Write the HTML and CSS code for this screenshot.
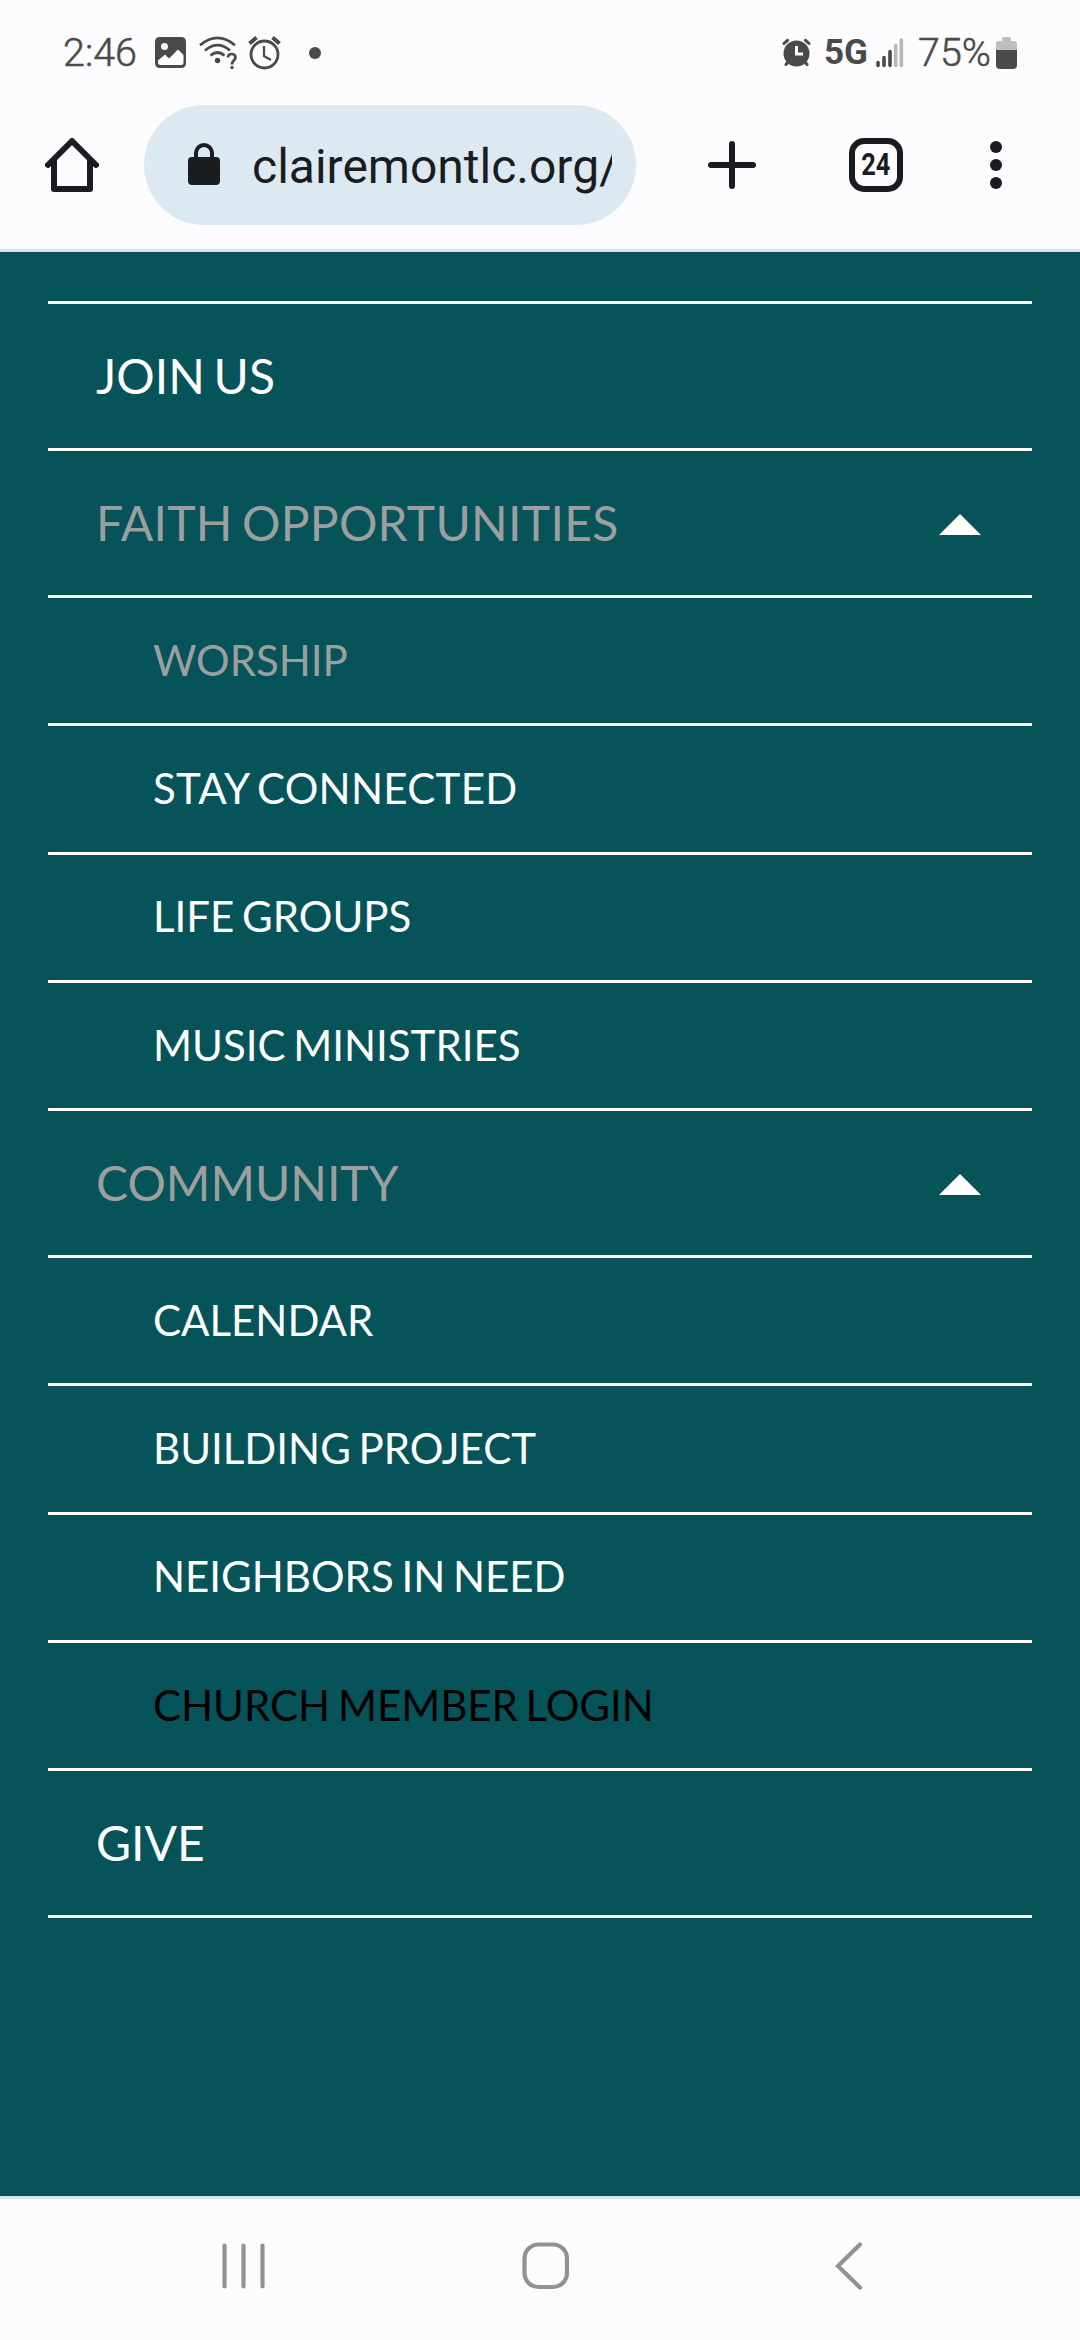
FILE: index.html
```html
<!DOCTYPE html>
<html lang="en">
<head>
<meta charset="utf-8">
<title>Clairemont LC</title>
<link rel="stylesheet" href="styles.css">
</head>
<body>
<div class="status">
  <span class="clock">2:46</span>
  <svg class="picture" width="31" height="31" viewBox="0 0 31 31"><path fill-rule="evenodd" fill="#4a4a4a" d="M5 0H26Q31 0 31 5V26Q31 31 26 31H5Q0 31 0 26V5Q0 0 5 0ZM9.500 6A3.500 3.500 0 1 0 9.500 13A3.500 3.500 0 1 0 9.500 6ZM3 23.500L10 17.500L14 21.500L23 12.500L28.500 18V25.500Q28.500 28 26 28H5.500Q3 28 3 25.500Z"/></svg>
  <svg class="wifi" width="38" height="34" viewBox="0 0 38 34" fill="none" stroke="#4a4a4a" stroke-width="2.700"><path d="M1 9.200Q18.500-5.500 36 9.200M6 14.500Q18.500 3.800 31 14.500M11.500 19.500Q18.500 13.500 25.500 19.500"/><circle cx="18.500" cy="24.500" r="2.700" fill="#4a4a4a" stroke="none"/><path d="M29 21.500C28.700 16.800 36.500 16.800 36.500 21.500C36.500 24.500 33 24.300 33 28.500"/><circle cx="33" cy="31.500" r="1.700" fill="#4a4a4a" stroke="none"/></svg>
  <svg class="alarm" width="33" height="34" viewBox="0 0 33 34" fill="none" stroke="#4a4a4a"><circle cx="16.500" cy="18.500" r="13.500" stroke-width="2.800"/><path stroke-width="2.200" d="M16 10V20L23 24"/><path stroke-width="4" d="M1.500 7.500L8.500 1.500M24.500 1.500L31.500 7.500"/></svg>
  <span class="dot"></span>
  <svg class="alarm-set" width="29" height="29" viewBox="0 0 29 29" fill="none" stroke="#4a4a4a" stroke-width="3" stroke-linecap="round"><circle cx="14.500" cy="15.500" r="13" fill="#4a4a4a" stroke="none"/><path d="M2 5.500L5.500 2.300M23.500 2.300L27 5.500M4 26.500L6 24M23 24L25 26.500"/><path stroke="#fcfcff" stroke-linecap="butt" d="M14.500 8V16H21"/></svg>
  <span class="network">5G</span>
  <svg class="signal" width="28" height="30" viewBox="0 0 28 30" stroke-width="3.600" stroke-linecap="round"><path stroke="#4a4a4a" d="M2 24.500V27.500M8 19.500V27.500M14 13.500V27.500"/><path stroke="#b7b7b9" d="M19.700 7.500V27.500M25.300 2V27.500"/></svg>
  <span class="percent">75%</span>
  <svg class="battery" width="21" height="32" viewBox="0 0 21 32"><path fill="#bebec0" d="M6 4V2Q6 0 8 0H13Q15 0 15 2V4H18Q21 4 21 7V13H0V7Q0 4 3 4Z"/><path fill="#4a4a4a" d="M0 13H21V28Q21 32 17 32H4Q0 32 0 28Z"/></svg>
</div>
<div class="toolbar">
  <svg class="home" width="54" height="54" viewBox="0 0 54 54" fill="none" stroke="#191d1f" stroke-width="6"><path stroke-linecap="round" stroke-linejoin="round" d="M3 27L27 3L51 27"/><path stroke-linejoin="round" d="M9 22V51H45V22"/></svg>
  <div class="address">
    <svg class="lock" width="32" height="42" viewBox="0 0 32 42"><rect y="14" width="32" height="28" rx="4" fill="#191d1f"/><path d="M8 16V10A8 8 0 0 1 24 10V16" fill="none" stroke="#191d1f" stroke-width="4"/></svg>
    <span class="url">clairemontlc.org/</span>
  </div>
  <svg class="plus" width="48" height="48" viewBox="0 0 48 48"><path d="M3 24H45M24 3V45" stroke="#191d1f" stroke-width="6" stroke-linecap="round"/></svg>
  <div class="tabs"><span class="count">24</span></div>
  <svg class="more" width="12" height="48" viewBox="0 0 12 48" fill="#191d1f"><circle cx="6" cy="6" r="6"/><circle cx="6" cy="24" r="6"/><circle cx="6" cy="42" r="6"/></svg>
</div>
<nav class="menu">
  <ul>
    <li class="item">JOIN US</li>
    <li class="item muted wide">FAITH OPPORTUNITIES<svg class="arrow" width="42" height="21" viewBox="0 0 42 21"><path fill="#fff" d="M21 0L42 21H0Z"/></svg></li>
    <li class="item sub muted">WORSHIP</li>
    <li class="item sub wide">STAY CONNECTED</li>
    <li class="item sub">LIFE GROUPS</li>
    <li class="item sub">MUSIC MINISTRIES</li>
    <li class="item muted">COMMUNITY<svg class="arrow" width="42" height="21" viewBox="0 0 42 21"><path fill="#fff" d="M21 0L42 21H0Z"/></svg></li>
    <li class="item sub">CALENDAR</li>
    <li class="item sub">BUILDING PROJECT</li>
    <li class="item sub">NEIGHBORS IN NEED</li>
    <li class="item sub current">CHURCH MEMBER LOGIN</li>
    <li class="item">GIVE</li>
  </ul>
</nav>
<div class="navbar">
  <svg class="recents" width="44" height="46" viewBox="0 0 44 46"><path d="M2.500 2.500V43.500M21.500 2.500V43.500M40.500 2.500V43.500" stroke="#929294" stroke-width="4.200" stroke-linecap="round"/></svg>
  <svg class="circle" width="48" height="48" viewBox="0 0 48 48"><rect x="2.500" y="2.500" width="42.500" height="42.500" rx="14" fill="none" stroke="#929294" stroke-width="4.200"/></svg>
  <svg class="back" width="28" height="48" viewBox="0 0 28 48"><path d="M25 2.500L3 24L25 45.500" fill="none" stroke="#929294" stroke-width="4.200" stroke-linecap="round"/></svg>
</div>
</body>
</html>
```
FILE: styles.css
```css
* { box-sizing: border-box; }
body { margin: 0; width: 1080px; height: 2340px; overflow: hidden; display: flex; flex-direction: column; background: #fcfcff; font-family: Roboto, sans-serif; }
svg { display: block; flex: none; }
.status { height: 105px; padding-left: 63px; display: flex; align-items: center; color: #4a4a4a; white-space: nowrap; }
.clock, .percent { font-size: 39.5px; font-weight: 300; line-height: 46px; flex: none; -webkit-text-stroke: 0.5px #4a4a4a; }
.clock { width: 92px; }
.wifi { margin-left: 13px; }
.alarm { margin-left: 11px; }
.dot { width: 12px; height: 12px; border-radius: 50%; background: #4a4a4a; margin-left: 28px; }
.alarm-set { margin-left: 461px; }
.network { width: 52px; margin-left: 13px; font-size: 35px; font-weight: 700; line-height: 46px; }
.percent { width: 78px; margin-left: 14px; }
.toolbar { height: 147px; padding: 0 0 24px 45px; border-bottom: 3px solid #dce4e9; display: flex; align-items: center; }
.address { width: 492px; height: 120px; margin-left: 45px; padding: 0 24px 0 44px; border-radius: 60px; background: #dde9f1; display: flex; align-items: center; }
.lock { margin-bottom: 2px; }
.url { margin-left: 32px; padding-top: 3px; width: 360px; overflow: hidden; color: #191d1f; font-size: 48px; line-height: 64px; white-space: nowrap; }
.plus { margin-left: 72px; }
.tabs { width: 54px; height: 54px; margin-left: 93px; border: 6px solid #191d1f; border-radius: 15px; display: flex; align-items: center; justify-content: center; color: #191d1f; }
.count { font-size: 31px; font-weight: 700; line-height: 36px; transform: scaleX(0.82); }
.more { margin-left: 87px; }
.menu { height: 1944px; padding: 49px 48px 0; background: #065359; font-family: Lato, sans-serif; }
.menu ul { list-style: none; margin: 0; padding: 0; border-top: 3px solid #fff; }
.item { height: 147px; padding: 0 51px 0 48px; border-bottom: 3px solid #fff; display: flex; align-items: center; justify-content: space-between; color: #fff; font-size: 48px; line-height: 60px; word-spacing: -0.072em; white-space: nowrap; }
.item.sub { height: 128.3px; padding: 0 51px 2px 105px; font-size: 42px; }
.item.wide { letter-spacing: 0.3px; }
.item.muted { color: #9c9f9f; }
.item.current { color: #000; }
.arrow { margin-top: 2px; }
.navbar { height: 144px; border-top: 3px solid #dce4e9; padding: 0 0 8px 221.5px; display: flex; align-items: center; }
.circle { margin-left: 256px; }
.back { margin-left: 265px; }
```
